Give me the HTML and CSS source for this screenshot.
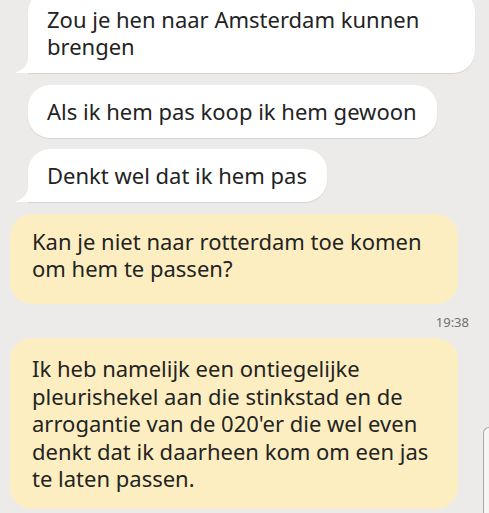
FILE: index.html
```html
<!DOCTYPE html>
<html lang="nl">
<head>
<meta charset="utf-8">
<title>Chat</title>
<link rel="stylesheet" href="styles.css">
</head>
<body>
<div class="chat">
  <div class="msg in first tail">Zou je hen naar Amsterdam kunnen<br>brengen</div>
  <div class="msg in">Als ik hem pas koop ik hem gewoon</div>
  <div class="msg in tail">Denkt wel dat ik hem pas</div>
  <div class="msg out">Kan je niet naar rotterdam toe komen<br>om hem te passen?</div>
  <div class="time">19:38</div>
  <div class="msg out big">Ik heb namelijk een ontiegelijke<br>pleurishekel aan die stinkstad en de<br>arrogantie van de 020'er die wel even<br>denkt dat ik daarheen kom om een jas<br>te laten passen.</div>
</div>
<div class="edge-box"></div>
</body>
</html>
```

FILE: styles.css
```css
html, body {
  margin: 0;
  padding: 0;
}
body {
  width: 489px;
  height: 513px;
  overflow: hidden;
  background: #edebe9;
  font-family: "Noto Sans", "Open Sans", sans-serif;
  color: #232323;
  position: relative;
}
.chat {
  display: flex;
  flex-direction: column;
  align-items: flex-start;
  margin-top: -10px;
}
.msg {
  position: relative;
  font-size: 22px;
  line-height: 27px;
  white-space: nowrap;
  box-sizing: border-box;
}
.msg.in {
  background: #ffffff;
  margin-left: 28px;
  padding: 13px 20px 13px 19px;
  border-radius: 22px;
  margin-bottom: 11px;
  box-shadow: 0 1px 1px rgba(0,0,0,0.10);
}
.msg.first {
  width: 447px;
  padding-top: 16px;
  padding-bottom: 13px;
  margin-bottom: 12px;
}
.msg.tail {
  border-bottom-left-radius: 0;
}
.msg.tail::before {
  content: "";
  position: absolute;
  left: -13px;
  bottom: 0;
  width: 14px;
  height: 16px;
  background: #ffffff;
  clip-path: path('M13 0 C13 8 8 13 0 16 L14 16 L14 0 Z');
}
.msg.out {
  background: #fdeec1;
  margin-left: 10px;
  width: 448px;
  padding: 14px 20px 22px 22px;
  border-radius: 22px;
  margin-top: 1px;
}
.msg.big {
  line-height: 27.5px;
  padding-top: 17px;
  padding-bottom: 16px;
  margin-top: 0;
}
.time {
  align-self: stretch;
  text-align: right;
  font-size: 13px;
  line-height: 18px;
  color: #6f6f6f;
  padding-right: 20px;
  margin: 9px 0 7px;
}
.edge-box {
  position: absolute;
  left: 483px;
  top: 427px;
  width: 5px;
  bottom: 0;
  border: 1px solid #a9a8a7;
  border-right: none;
  border-bottom: none;
  border-top-left-radius: 6px;
  background: #f5f4f3;
}
```
